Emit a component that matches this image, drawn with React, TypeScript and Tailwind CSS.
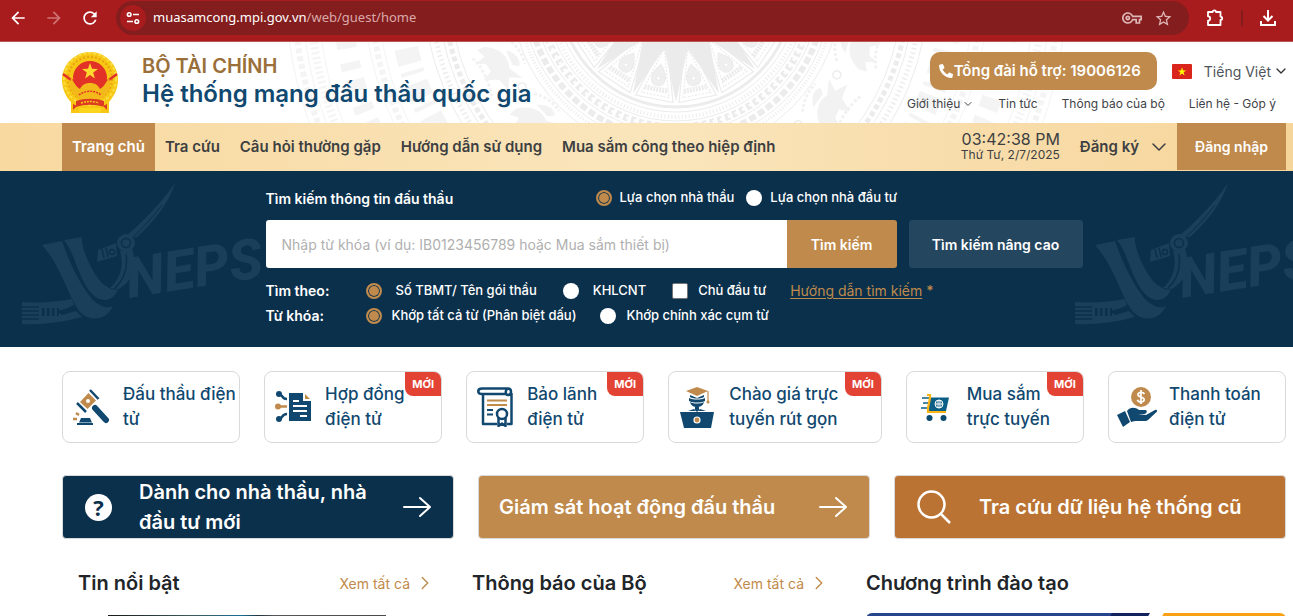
import type { ReactNode } from "react";
import { ChevronDown, ChevronRight } from "lucide-react";
import { FaPhoneAlt } from "react-icons/fa";
import { MdArrowBack, MdArrowForward, MdOutlineVpnKey, MdRefresh, MdStarBorder } from "react-icons/md";

const NAVY = "#10486f";
const GOLD = "#bf8a4b";

function BrowserBar() {
  return (
    <div className="flex h-[42px] items-start gap-4 border-b border-[#bd5556] bg-[#a81c1e] pr-4 text-white">
      <div className="flex h-9 items-center gap-4 pl-2">
        <button type="button" aria-label="Back">
          <MdArrowBack size={20} />
        </button>
        <button type="button" aria-label="Forward" className="text-[#cf7475]">
          <MdArrowForward size={20} />
        </button>
        <button type="button" aria-label="Reload">
          <MdRefresh size={20} />
        </button>
      </div>
      <div className="mt-px flex h-[34px] flex-1 items-center rounded-full bg-[#831d1e] pr-4 pl-1">
        <span className="flex size-[26px] items-center justify-center rounded-full bg-[#a81c1e]">
          <svg width="14" height="14" viewBox="0 0 14 14" fill="none" stroke="#fff" strokeWidth="1.6">
            <circle cx="3.2" cy="3.5" r="1.8" />
            <path d="M7 3.5h6M1 10.5h6" />
            <circle cx="10.8" cy="10.5" r="1.8" />
          </svg>
        </span>
        <p className="ml-[7px] flex-1 font-['Noto_Sans',sans-serif] text-[13px] text-[#dba9a9]">
          <span className="text-white">muasamcong.mpi.gov.vn</span>/web/guest/home
        </p>
        <div className="flex items-center gap-3 text-[#dfb7b7]">
          <MdOutlineVpnKey size={20} />
          <MdStarBorder size={19} />
        </div>
      </div>
      <div className="flex h-9 items-center gap-4">
        <svg width="20" height="20" viewBox="0 0 20 20" fill="none" stroke="#fff" strokeWidth="1.8" strokeLinejoin="round">
          <path d="M3 4h4.600a1.700 1.700 0 0 1 3.400 0H15.500v4.600a1.700 1.700 0 0 1 0 3.400V17H3v-4.300a2.200 2.200 0 0 0 0-4.400z" />
        </svg>
        <span className="h-4 w-0.5 bg-[#831d1e]" />
        <svg width="18" height="18" viewBox="0 0 18 18" fill="none" stroke="#fff" strokeWidth="2">
          <path d="M9 1v10M4.500 7 9 11.500 13.500 7M2 12v4h14v-4" />
        </svg>
      </div>
    </div>
  );
}

function DrumPattern() {
  const rays = Array.from({ length: 16 }, (_, i) => i * 22.5);
  const birds = Array.from({ length: 18 }, (_, i) => i * 20 + 6);
  return (
    <svg
      className="absolute inset-0 h-full w-full"
      viewBox="0 0 1293 81"
      preserveAspectRatio="xMidYMin slice"
      fill="none"
      stroke="#ececec"
      aria-hidden="true"
    >
      <g transform="translate(676 -52)">
        {rays.map((angle) => (
          <g key={angle} transform={`rotate(${angle})`}>
            <path d="M-18 30 0 112 18 30z" fill="#ebebeb" stroke="none" />
            <g transform="rotate(11.25)" strokeWidth="1.200">
              <path d="M0 48 19 111H-19z" />
              <path d="M0 60 14 107H-14z" strokeDasharray="2 1.500" />
              <path d="M0 76c8 10 8 14 6 18s-10 4-12 0-2-8 6-18z" fill="#efefef" />
              <circle cy="90" r="2" fill="#fff" />
              <path d="M-12 101h24" strokeWidth="5" strokeDasharray="2 1" />
            </g>
          </g>
        ))}
        <circle r="117" strokeWidth="3" />
        <circle r="122" />
        <circle r="127" strokeWidth="4" strokeDasharray="1 2.500" />
        <circle r="131" />
        <circle r="137" strokeWidth="7" strokeDasharray="5 3" />
        <circle r="137" stroke="#fff" strokeWidth="3" strokeDasharray="2 6" />
        <circle r="143" />
        <circle r="149" strokeWidth="6" strokeDasharray="7 3" />
        <circle r="155" />
        <circle r="159" strokeWidth="3" strokeDasharray="1 2" />
        <circle r="165" />
        {birds.map((angle) => (
          <g key={angle} transform={`rotate(${angle}) translate(0 194)`} fill="#f2f2f2" stroke="none">
            <path d="M-26 4c8-14 18-18 30-14l14-8-6 12 12 6-14 4-6 14-5-10-9 2-4 10-3-12-9 4z" />
            <path d="M-14-14c6-8 14-10 20-6l-4 6z" />
            <path d="M-20 20c8-6 30-6 44-2M-24-20c10-6 20-8 30-6" fill="none" stroke="#f2f2f2" strokeWidth="3" strokeDasharray="3 2" />
            <circle cx="26" cy="-14" r="4" fill="none" stroke="#ececec" strokeWidth="1.500" />
          </g>
        ))}
        <circle r="226" />
        <circle r="232" strokeWidth="5" strokeDasharray="5 3" />
        <circle r="238" />
        <circle r="245" strokeWidth="5" strokeDasharray="1.500 3" />
        <circle r="252" />
        <g stroke="#f4f4f4">
          <circle r="276" strokeWidth="24" strokeDasharray="16 9 4 7" />
          <circle r="298" />
          <circle r="305" strokeWidth="6" strokeDasharray="5 3" />
          <circle r="312" />
          <circle r="334" strokeWidth="20" strokeDasharray="8 14 12 10" />
          <circle r="358" />
          <circle r="366" strokeWidth="8" strokeDasharray="2 3" />
          <circle r="374" />
          <circle r="382" strokeWidth="6" strokeDasharray="5 3" />
          <circle r="390" />
        </g>
      </g>
    </svg>
  );
}

function Emblem() {
  return (
    <svg width="56" height="62" viewBox="0 0 56 62" role="img" aria-label="Quốc huy Việt Nam">
      <path
        d="M28 0c5 0 10 1 14 4 8 4 14 13 14 24 0 9-4 16-9 22v11H9V50C4 45 0 37 0 28 0 17 6 8 14 4 18 1 23 0 28 0z"
        fill="#f7c713"
      />
      <circle cx="28" cy="27" r="22" fill="none" stroke="#e8a015" strokeWidth="2" strokeDasharray="2 2" />
      <circle cx="28" cy="27" r="26" fill="none" stroke="#f9df45" strokeWidth="2" strokeDasharray="3 2" />
      <circle cx="28" cy="26" r="17" fill="#e23127" />
      <path d="M1 22l11 8M55 22l-11 8" stroke="#e23127" strokeWidth="2.500" />
      <path d="m28 11 2 5.800 6 .1-4.800 3.700 1.700 5.900-4.900-3.400-4.900 3.400 1.700-5.900L20 16.900l6-.1z" fill="#ffd92e" />
      <path
        d="M9 26c3 4 5 9 9 11 2-4 5-6 10-6s8 2 10 6c4-2 6-7 9-11 3 10-2 18-9 21H18c-7-3-12-11-9-21z"
        fill="#f3b91b"
      />
      <path d="M17 43c6-5 16-5 22 0" fill="none" stroke="#e23127" strokeWidth="1.500" strokeDasharray="2 1" />
      <path d="M14 49c9-3 19-3 28 0v6c-9-3-19-3-28 0zM11 52l4 2-4 4zM45 52l-4 2 4 4z" fill="#dc3a22" />
      <path d="M19 51c6-2 12-2 18 0" fill="none" stroke="#f7c713" strokeWidth="1.500" strokeDasharray="2 1" />
      <path d="M17 56h22v5H17z" fill="#fbd51c" />
    </svg>
  );
}

function SiteHeader() {
  return (
    <header className="relative h-[81px] bg-white pr-2 pl-[62px]">
      <DrumPattern />
      <div className="relative flex h-full items-start justify-between">
        <div className="flex gap-6 pt-[10px]">
          <Emblem />
          <div>
            <p className="text-[20px] leading-7 font-semibold text-[#9a6f39]">BỘ TÀI CHÍNH</p>
            <h1 className="text-[24px] leading-7 font-semibold text-[#10486f]">Hệ thống mạng đấu thầu quốc gia</h1>
          </div>
        </div>
        <div className="pt-[10px]">
          <div className="flex items-center justify-end">
            <a
              href="#support"
              className="flex h-[38px] items-center gap-px rounded-[10px] bg-[#bf8a4b] pr-4 pl-[9px] text-[15px] font-semibold text-white"
            >
              <FaPhoneAlt size={14} />
              Tổng đài hỗ trợ: 19006126
            </a>
            <button type="button" className="-mr-1 ml-[15px] flex items-center text-[14px] text-[#50555b]">
              <svg className="mr-3" width="20" height="15" viewBox="0 0 20 15">
                <rect width="20" height="15" rx="1" fill="#da251d" />
                <path d="m10 3.300 1 3.100h3.200l-2.600 1.900 1 3.100L10 9.500l-2.600 1.900 1-3.100-2.600-1.900H9z" fill="#ff0" />
              </svg>
              Tiếng Việt
              <ChevronDown className="ml-0.5 text-[#333]" size={16} />
            </button>
          </div>
          <nav className="mt-1 flex items-center justify-end gap-6 pr-[9px] text-[12px] leading-5 text-[#3f4348]">
            <a href="#about" className="flex items-center gap-0.5">
              Giới thiệu <ChevronDown size={12} />
            </a>
            <a href="#news">Tin tức</a>
            <a href="#notices">Thông báo của bộ</a>
            <a href="#contact">Liên hệ - Góp ý</a>
          </nav>
        </div>
      </div>
    </header>
  );
}

const menu = ["Tra cứu", "Câu hỏi thường gặp", "Hướng dẫn sử dụng", "Mua sắm công theo hiệp định"];

function MainNav() {
  return (
    <nav className="flex h-12 items-center justify-between bg-gradient-to-r from-[#f8d9a0] via-[#fae5bb] to-[#f6d59b] pr-[7px] pl-[62px] text-[15px] font-semibold text-[#3d3f42]">
      <div className="flex h-full items-center">
        <a href="#home" className="flex h-full items-center bg-[#bf8a4b] px-[10px] text-white">
          Trang chủ
        </a>
        {menu.map((item) => (
          <a key={item} href="#menu" className="px-[10px]">
            {item}
          </a>
        ))}
      </div>
      <div className="flex h-full items-center">
        <div className="text-right font-normal">
          <p className="text-[16px] leading-4">03:42:38 PM</p>
          <p className="text-[12px] leading-4">Thứ Tư, 2/7/2025</p>
        </div>
        <button type="button" className="ml-5 flex items-center gap-2">
          Đăng ký <ChevronDown size={24} strokeWidth={1.5} />
        </button>
        <button type="button" className="ml-[6px] h-[47px] self-start bg-[#bf8a4b] px-[18px] text-[14px] text-white">
          Đăng nhập
        </button>
      </div>
    </nav>
  );
}

function NepsMark() {
  return (
    <svg width="250" height="156" viewBox="0 0 250 156" fill="#193f5a" aria-hidden="true">
      <path d="M22 70 42 66c8 24 20 46 30 58 8 8 16 10 21 7-7 15-23 16-33 6C48 122 42 92 22 70z" />
      <path d="M44 65 62 62c-2 6 8 34 20 46 6 5 12 8 16 6-4 13-18 14-26 5C58 104 56 80 44 65z" />
      <path d="M2 127c17 1 35 0 50-3l2 6c-5 3-11 5-17 6l5 4 14-4 6 6c-18 5-40 8-60 7z" />
      <path d="M2 132h17M2 136h17M2 140h17M2 144h17" stroke="#0b304c" strokeWidth="1.500" />
      <path d="M22 137h17" stroke="#0b304c" strokeWidth="8" strokeDasharray="2.500 2.500" />
      <path d="M155 8c-5 17-18 36-38 54l-13 1c14-12 36-33 51-55z" />
      <path d="M142 30c-10 13-20 24-29 32" stroke="#0b304c" strokeWidth="1" />
      <circle cx="106" cy="68" r="9" />
      <circle cx="106" cy="68" r="4.500" fill="none" stroke="#0b304c" strokeWidth="1.500" />
      <path d="m78 75 18-7 1 13-20 6z" />
      <path d="m82 74 2 9M86 73l2 9" stroke="#0b304c" strokeWidth="1.500" />
      <circle cx="92" cy="77" r="2.500" fill="none" stroke="#0b304c" strokeWidth="1.500" />
      <path d="M100 76c4 14 1 27-10 37l9 1c16-10 18-24 13-40z" />
      <path d="M106 79c2 14-1 25-11 34" fill="none" stroke="#0b304c" strokeWidth="1.500" />
      <text
        x="109"
        y="123"
        transform="rotate(-9 109 123)"
        fontFamily="Roboto, sans-serif"
        fontSize="56"
        fontStyle="italic"
        fontWeight="800"
      >
        NEPS
      </text>
    </svg>
  );
}

type RadioProps = { name: string; label: string; defaultChecked?: boolean; className: string };

function Radio({ name, label, defaultChecked, className }: RadioProps) {
  return (
    <label className={`flex items-center ${className}`}>
      <input
        type="radio"
        name={name}
        defaultChecked={defaultChecked}
        className="size-4 shrink-0 appearance-none rounded-full bg-white checked:border-2 checked:border-[#bf8a4b] checked:bg-[#bf8a4b] checked:shadow-[inset_0_0_0_1px_#0b304c]"
      />
      {label}
    </label>
  );
}

function SearchPanel() {
  return (
    <section className="relative h-44 overflow-hidden bg-[#0b304c] pr-[7px] pl-[62px]">
      <div className="absolute top-1 left-5">
        <NepsMark />
      </div>
      <div className="absolute top-1 -right-[30px]">
        <NepsMark />
      </div>
      <form className="relative mx-auto w-full max-w-[817px] pt-[15px] text-[13px] font-medium text-white">
        <div className="flex h-6 items-center">
          <h2 className="w-[330px] text-[14px] font-semibold">Tìm kiếm thông tin đấu thầu</h2>
          <Radio name="target" label="Lựa chọn nhà thầu" defaultChecked className="gap-2" />
          <Radio name="target" label="Lựa chọn nhà đầu tư" className="ml-3 gap-2" />
        </div>
        <div className="mt-[10px] flex h-12 text-[14px]">
          <input
            type="text"
            aria-label="Từ khóa tìm kiếm"
            placeholder="Nhập từ khóa (ví dụ: IB0123456789 hoặc Mua sắm thiết bị)"
            className="min-w-0 flex-1 rounded-l-[3px] bg-white px-4 font-normal text-[#333] placeholder:text-[#b0b0b0]"
          />
          <button type="button" className="w-[110px] rounded-r-[3px] bg-[#bf8a4b] font-semibold">
            Tìm kiếm
          </button>
          <button type="button" className="ml-3 w-[174px] rounded-[3px] bg-[#24465f] font-semibold">
            Tìm kiếm nâng cao
          </button>
        </div>
        <div className="mt-[10px] flex h-[25px] items-center">
          <span className="w-[100px] text-[14px] font-semibold">Tìm theo:</span>
          <Radio name="field" label="Số TBMT/ Tên gói thầu" defaultChecked className="gap-[14px]" />
          <Radio name="field" label="KHLCNT" className="ml-[26px] gap-[14px]" />
          <label className="ml-[26px] flex items-center gap-[10px]">
            <input type="checkbox" className="size-4 appearance-none rounded-[2px] border border-[#767676] bg-white" />
            Chủ đầu tư
          </label>
          <a href="#guide" className="ml-6 text-[14px] font-normal text-[#bf8a4b] underline underline-offset-2">
            Hướng dẫn tìm kiếm
          </a>
          <span className="ml-1 text-[14px] text-[#bf8a4b]">*</span>
        </div>
        <div className="flex h-[25px] items-center">
          <span className="w-[100px] text-[14px] font-semibold">Từ khóa:</span>
          <Radio name="match" label="Khớp tất cả từ (Phân biệt dấu)" defaultChecked className="gap-[10px]" />
          <Radio name="match" label="Khớp chính xác cụm từ" className="ml-6 gap-[10px]" />
        </div>
      </form>
    </section>
  );
}

function GavelIcon() {
  return (
    <svg width="37" height="36" viewBox="0 0 37 36">
      <path d="M7 13 15.500 4 23 11.500 14.500 20z" fill={GOLD} />
      <circle cx="15" cy="12" r="2" fill="#fff" />
      <path d="m4 14 9 9M17 1l8.500 9" stroke={NAVY} strokeWidth="2.500" />
      <path d="m22 19 11 12" stroke={NAVY} strokeWidth="6" strokeLinecap="round" />
      <path d="M4 35h16" stroke={NAVY} strokeWidth="2" />
      <path d="M8 29h9l2 4.500H6z" fill={NAVY} />
      <path d="M0 30h4M3 24l3 2" stroke={GOLD} strokeWidth="2.500" />
    </svg>
  );
}

function ContractIcon() {
  return (
    <svg width="36" height="34" viewBox="0 0 36 34">
      <path d="M14 3h14v8h8v20H14z" fill={NAVY} />
      <path d="m30 4 5 5h-5z" fill={GOLD} />
      <path d="M18 11h6M18 16h14M18 21h14M25 26h7" stroke="#fff" strokeWidth="2" />
      <path d="M4 4c4 0 2 5 8 5M4 29c4 0 2-5 8-5" fill="none" stroke={NAVY} strokeWidth="2.500" />
      <circle cx="4" cy="4" r="3" fill={NAVY} />
      <circle cx="4" cy="29" r="3" fill={NAVY} />
      <circle cx="3" cy="16.500" r="3" fill={GOLD} />
      <path d="M4 16.500h8" stroke={GOLD} strokeWidth="2.500" />
    </svg>
  );
}

function CertificateIcon() {
  return (
    <svg width="36" height="40" viewBox="0 0 36 40" fill="none" stroke={NAVY} strokeWidth="2.500" strokeLinejoin="round">
      <path d="M6 8v29h14M34.500 6v31H30M28 7H5C0 7 0 1.500 5 1.500h26c4 0 4 6.500 0 6.500-3 0-3-5 0-6.500" />
      <path d="M10 13.500h20M10 18h20" stroke={GOLD} strokeWidth="2" />
      <path d="M10 23h6M10 27.500h6" strokeWidth="2" />
      <circle cx="25" cy="27" r="5" />
      <path d="M21.500 31v8l3.500-2.500 3.500 2.500v-8" />
    </svg>
  );
}

function ScholarIcon() {
  return (
    <svg width="34" height="41" viewBox="0 0 34 41">
      <path d="m6 4 11-4 11 4-11 5z" fill={GOLD} />
      <path d="M10 8v2c4 2 10 2 14 0V8l-7 3z" fill={NAVY} />
      <path d="M28 4v11" stroke={GOLD} strokeWidth="1.200" />
      <circle cx="28" cy="15" r="1.500" fill={GOLD} />
      <path d="M9 11c5 2 11 2 16 0v3c-5 2-11 2-16 0zM10 15c4 2 10 2 14 0-1 4-4 5-7 5s-6-1-7-5zM15 20h4v3l-2 2-2-2z" fill={NAVY} />
      <path d="M8 24 14 22l2 2zM26 24l-6-2-2 2z" fill={NAVY} />
      <path d="M0 25h34l-3 16H4z" fill={NAVY} />
      <circle cx="17" cy="33" r="3" fill={GOLD} stroke="#fff" strokeWidth="1.200" />
    </svg>
  );
}

function CartIcon() {
  return (
    <svg width="28" height="27" viewBox="0 0 28 27">
      <path d="M8 3.500h20L25 17H8z" fill="#0b5f86" />
      <path d="M1 4h7M2 9h6M0 14h8" stroke="#0b5f86" strokeWidth="1.500" />
      <g fill="none" stroke="#fff">
        <circle cx="18" cy="10" r="4" />
        <path d="M14 10h8M18 6v8" />
        <ellipse cx="18" cy="10" rx="2" ry="4" strokeWidth=".6" />
      </g>
      <path d="M6 1h3v3L7 14v4h18" fill="none" stroke="#fdb515" strokeWidth="2.200" />
      <circle cx="8.500" cy="24" r="3" fill="#0b4a6f" />
      <circle cx="22.500" cy="24" r="3" fill="#0b4a6f" />
    </svg>
  );
}

function PaymentIcon() {
  return (
    <svg width="40" height="40" viewBox="0 0 40 40">
      <circle cx="24" cy="10" r="10" fill={GOLD} />
      <path
        d="M27.500 7c-1-2-6-2.500-6.500.5-.3 3 6.500 2 6.200 5.200-.2 3-6 3-6.800 0M24 3v14"
        fill="none"
        stroke="#fff"
        strokeWidth="1.700"
      />
      <path d="m0 28 8-4 5 11-7 5z" fill={NAVY} />
      <path d="M10 24c3-4 8-4 12-1h6c3 0 2 4-1 4h-6l8 1 9-5c2-1 3 1 1 2.500L31 33c-2 1.500-4 1-7 1h-6l-4 1z" fill={NAVY} />
    </svg>
  );
}

const services: { title: string; icon: ReactNode; isNew?: boolean }[] = [
  { title: "Đấu thầu điện tử", icon: <GavelIcon /> },
  { title: "Hợp đồng điện tử", icon: <ContractIcon />, isNew: true },
  { title: "Bảo lãnh điện tử", icon: <CertificateIcon />, isNew: true },
  { title: "Chào giá trực tuyến rút gọn", icon: <ScholarIcon />, isNew: true },
  { title: "Mua sắm trực tuyến", icon: <CartIcon />, isNew: true },
  { title: "Thanh toán điện tử", icon: <PaymentIcon /> },
];

function ServiceCards() {
  return (
    <div className="grid grid-cols-[1fr_1fr_1fr_1.2fr_1fr_1fr] gap-6">
      {services.map((service) => (
        <a
          key={service.title}
          href="#service"
          className="relative flex h-[72px] items-center rounded-[8px] border border-[#d9d9d9] bg-white text-[17px] leading-[25px] font-medium text-[#10486f]"
        >
          <span className="flex w-[60px] shrink-0 justify-center pr-1">{service.icon}</span>
          <span className={service.isNew ? "pr-6" : ""}>{service.title}</span>
          {service.isNew && (
            <span className="absolute top-0 right-0 flex h-6 w-9 items-center justify-center rounded-tr-[7px] rounded-bl-[8px] bg-[#e34335] text-[11px] font-bold text-white">
              MỚI
            </span>
          )}
        </a>
      ))}
    </div>
  );
}

function LongArrow() {
  return (
    <svg
      className="shrink-0"
      width="28"
      height="22"
      viewBox="0 0 28 22"
      fill="none"
      stroke="#fff"
      strokeWidth="2"
      strokeLinecap="round"
      strokeLinejoin="round"
    >
      <path d="M1 11h26M17 2l10 9-10 9" />
    </svg>
  );
}

function Banners() {
  return (
    <div className="mt-8 grid grid-cols-3 gap-6 text-[20px] leading-[30px] font-semibold text-white">
      <a href="#new" className="flex h-16 items-center rounded-[4px] border border-[#d9d9d9] bg-[#0b304c] pr-[22px] pl-[22px]">
        <span className="flex size-[27px] shrink-0 items-center justify-center rounded-full bg-white font-['Open_Sans',sans-serif] text-[22px] font-bold text-[#0b304c]">
          ?
        </span>
        <span className="mr-6 ml-[27px] flex-1">Dành cho nhà thầu, nhà đầu tư mới</span>
        <LongArrow />
      </a>
      <a
        href="#monitor"
        className="flex h-16 items-center justify-between rounded-[4px] border border-[#d9d9d9] bg-[#bf8a4b] pr-[22px] pl-5"
      >
        Giám sát hoạt động đấu thầu
        <LongArrow />
      </a>
      <a href="#legacy" className="flex h-16 items-center gap-7 rounded-[4px] border border-[#d9d9d9] bg-[#bb7333] pl-[22px]">
        <svg width="34" height="34" viewBox="0 0 34 34" fill="none" stroke="#fff" strokeWidth="2.500">
          <circle cx="14.500" cy="14.500" r="13" />
          <path d="m23.500 23.500 9.500 9.500" />
        </svg>
        Tra cứu dữ liệu hệ thống cũ
      </a>
    </div>
  );
}

function ColumnTitle({ title, more }: { title: string; more?: boolean }) {
  return (
    <div className="flex h-8 items-center justify-between">
      <h2 className="text-[20px] font-semibold text-[#212529]">{title}</h2>
      {more && (
        <a href="#all" className="flex items-center gap-1 text-[14px] text-[#bf8a4b]">
          Xem tất cả
          <ChevronRight size={22} strokeWidth={1.5} className="-mr-2" />
        </a>
      )}
    </div>
  );
}

function NewsColumns() {
  return (
    <div className="mt-7 grid grid-cols-[5fr_5fr_6fr] gap-11 pl-4">
      <div>
        <ColumnTitle title="Tin nổi bật" more />
        <div className="mt-4 ml-[30px] h-40 w-[278px] bg-[linear-gradient(90deg,#16181a_0%,#3d5a5c_30%,#1b6d96_48%,#20343f_54%,#55565a_60%,#4a4a4d_100%)]" />
      </div>
      <div>
        <ColumnTitle title="Thông báo của Bộ" more />
      </div>
      <div>
        <ColumnTitle title="Chương trình đào tạo" />
        <svg className="mt-[14px] w-full rounded-[6px]" viewBox="0 0 420 160">
          <path d="M0 0h260L180 160H0z" fill="#27448f" />
          <path d="M246 0h44L200 160h-40z" fill="#12235e" />
          <path d="M284 0h20L210 160h-20z" fill="#fff" />
          <path d="M298 0h122v160H200z" fill="#f9a113" />
        </svg>
      </div>
    </div>
  );
}

export default function App() {
  return (
    <div className="h-screen overflow-hidden bg-white font-[Inter,sans-serif]">
      <BrowserBar />
      <SiteHeader />
      <MainNav />
      <SearchPanel />
      <main className="pt-6 pr-[7px] pl-[62px]">
        <ServiceCards />
        <Banners />
        <NewsColumns />
      </main>
    </div>
  );
}
